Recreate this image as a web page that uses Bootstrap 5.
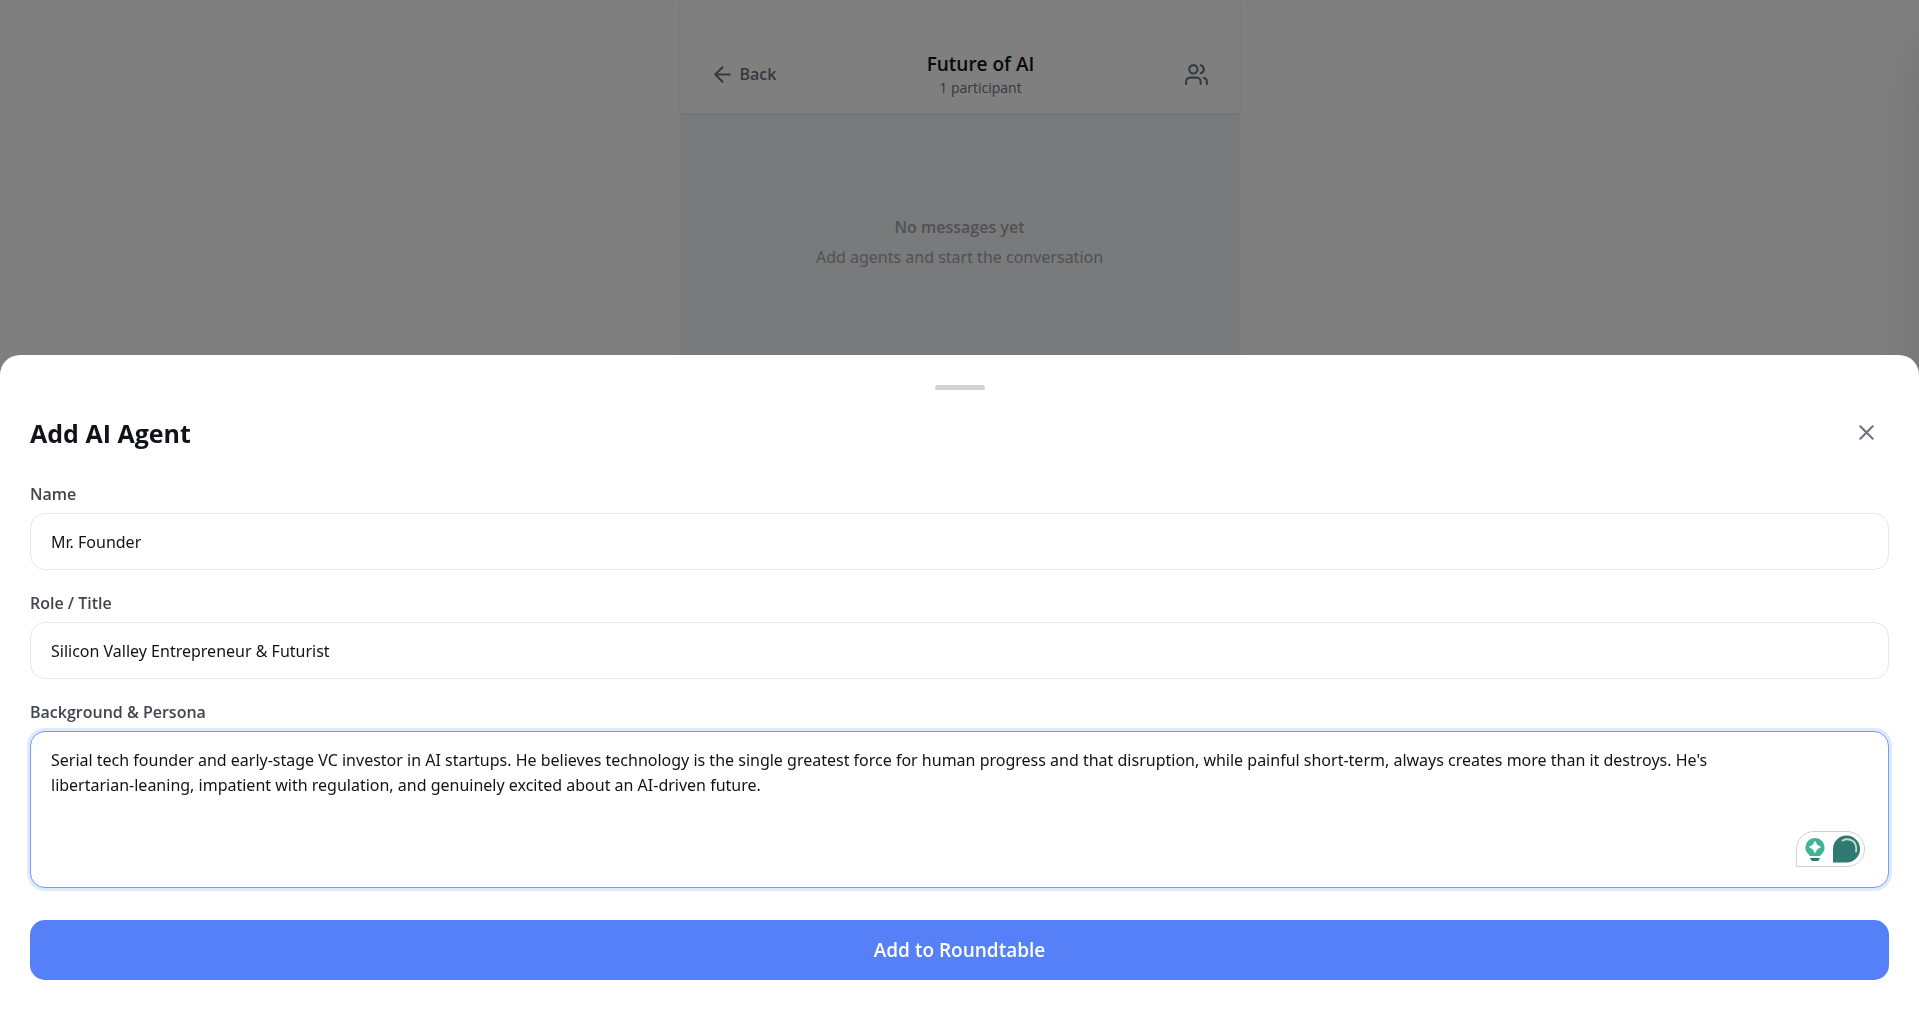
<!DOCTYPE html>
<html lang="en">
<head>
<meta charset="utf-8">
<meta name="viewport" content="width=device-width, initial-scale=1">
<title>Future of AI – Roundtable</title>
<link href="https://cdn.jsdelivr.net/npm/bootstrap@5.3.0/dist/css/bootstrap.min.css" rel="stylesheet">
<style>
  body { font-family: "Open Sans", "Noto Sans", sans-serif; font-size: 16px; color: #111318; overflow: hidden; }
  .chat-shell { max-width: 560px; min-height: 100vh; background: #f3f4f6; box-shadow: 0 1px 3px rgba(0,0,0,.05); }
  .chat-head { padding: 50px 20px 15px; background: #fff; border-bottom: 1px solid #e5e7eb; box-shadow: 0 1px 2px rgba(0,0,0,.05); }
  .chat-head svg, .sheet svg.close-x { width: 25px; height: 25px; display: block; }
  .plain-btn { padding: 10px; border: 0; background: none; color: #6b7280; }
  .back-btn { gap: 5px; font-weight: 600; line-height: 25px; }
  .chat-title { font-size: 19px; line-height: 28px; font-weight: 600; }
  .chat-sub { font-size: 14px; line-height: 20px; color: #6b7280; }
  .empty-note { padding-top: 98px; color: #a3a3a6; line-height: 30px; }
  .line-icon { fill: none; stroke: currentColor; stroke-width: 2; stroke-linecap: round; stroke-linejoin: round; }
  .side-drawer { left: 100%; width: 400px; box-shadow: 0 31px 62px -15px rgba(0,0,0,.2); }
  .sheet.offcanvas-bottom { height: auto; max-height: 100%; padding: 30px 30px 44px; border: 0; border-radius: 20px 20px 0 0; color: #111318; }
  .grabber { width: 50px; height: 5px; border-radius: 5px; background: #d1d1d6; margin-bottom: 20px; }
  .sheet-head { margin-bottom: 26px; }
  .sheet-title { font-size: 25px; line-height: 38px; font-weight: 700; }
  .field { margin-bottom: 20px; }
  .field label { display: block; line-height: 27px; margin-bottom: 5px; color: #40444d; font-weight: 600; }
  .reading, .field .form-control { font-family: "Noto Sans", "Open Sans", sans-serif; }
  .field .form-control { padding: 16px 20px 14px; line-height: 25px; border: 1px solid #e5e7eb; border-radius: 15px; color: #111318; }
  .field textarea.form-control { height: 157px; padding-right: 100px; resize: none; overflow: hidden; border-color: #6f9ff8; box-shadow: 0 0 0 3px #dfeafd; }
  .helper { right: 24px; bottom: 21px; width: 69px; height: 36px; }
  .add-btn { height: 60px; border: 0; border-radius: 15px; margin-top: 32px; background: #5580f8; color: #fff; font-size: 19px; font-weight: 600; }
</style>
</head>
<body>
<main class="chat-shell mx-auto">
  <header class="chat-head d-flex justify-content-between align-items-center">
    <button type="button" class="plain-btn back-btn d-flex align-items-center">
      <svg class="line-icon" viewBox="0 0 24 24" aria-hidden="true"><path d="M19 12H5M12 19l-7-7 7-7"/></svg>
      <span>Back</span>
    </button>
    <div class="text-center">
      <h1 class="chat-title m-0">Future of AI</h1>
      <div class="chat-sub">1 participant</div>
    </div>
    <button type="button" class="plain-btn" aria-label="Participants">
      <svg class="line-icon" viewBox="0 0 24 24" aria-hidden="true"><path d="M16 21v-2a4 4 0 0 0-4-4H6a4 4 0 0 0-4 4v2M22 21v-2a4 4 0 0 0-3-3.870M16 3.130a4 4 0 0 1 0 7.750"/><circle cx="9" cy="7" r="4"/></svg>
    </button>
  </header>
  <section class="empty-note text-center">
    <div class="fw-semibold">No messages yet</div>
    <div class="reading">Add agents and start the conversation</div>
  </section>
</main>
<aside class="side-drawer position-fixed top-0 bottom-0 bg-white"></aside>
<div class="offcanvas-backdrop show"></div>

<div class="sheet offcanvas offcanvas-bottom show" tabindex="-1" role="dialog" aria-labelledby="sheetTitle" data-bs-backdrop="false">
  <div class="grabber mx-auto"></div>
  <div class="sheet-head d-flex justify-content-between align-items-center">
    <h2 class="sheet-title m-0" id="sheetTitle">Add AI Agent</h2>
    <button type="button" class="plain-btn" aria-label="Close">
      <svg class="line-icon close-x" viewBox="0 0 24 24" aria-hidden="true"><path d="M18 6L6 18M6 6l12 12"/></svg>
    </button>
  </div>
  <form>
    <div class="field">
      <label for="agentName">Name</label>
      <input class="form-control" id="agentName" type="text" value="Mr. Founder">
    </div>
    <div class="field">
      <label for="agentRole">Role / Title</label>
      <input class="form-control" id="agentRole" type="text" value="Silicon Valley Entrepreneur &amp; Futurist">
    </div>
    <div class="field mb-0">
      <label for="agentPersona">Background &amp; Persona</label>
      <div class="position-relative">
        <textarea class="form-control" id="agentPersona" spellcheck="false">Serial tech founder and early-stage VC investor in AI startups. He believes technology is the single greatest force for human progress and that disruption, while painful short-term, always creates more than it destroys. He's libertarian-leaning, impatient with regulation, and genuinely excited about an AI-driven future.</textarea>
        <svg class="helper position-absolute" viewBox="0 0 69 36" aria-hidden="true">
          <path d="M.5 35.500V18A17.500 17.500 0 0 1 18 .5H51a17.500 17.500 0 0 1 0 35z" fill="#fff" stroke="#cfd1d8"/>
          <path d="M19 7a9.500 9.500 0 0 0-5.500 17.200V25h11v-.8A9.500 9.500 0 0 0 19 7z" fill="#43b397"/>
          <path d="M19 10.500Q20.200 15 24.500 16 20.200 17.200 19 21.500 17.800 17.200 13.500 16 17.800 15 19 10.500z" fill="#fff" stroke="#fff" stroke-width="1" stroke-linejoin="round"/>
          <path d="M14 27h10l-1 2q-.5 1-2 1h-4q-1.500 0-2-1z" fill="#2f7a70"/>
          <path d="M37 31.500V18A13.500 13.500 0 1 1 50.500 31.500z" fill="#2f7a70"/>
          <path d="M46.500 9.500Q52 6.500 57.500 10.500 61 14 60 20.500" fill="none" stroke="#c9dcd9" stroke-width="1.800" stroke-linecap="round"/>
        </svg>
      </div>
    </div>
    <button type="button" class="add-btn btn w-100">Add to Roundtable</button>
  </form>
</div>
<script src="https://cdn.jsdelivr.net/npm/bootstrap@5.3.0/dist/js/bootstrap.bundle.min.js"></script>
</body>
</html>
